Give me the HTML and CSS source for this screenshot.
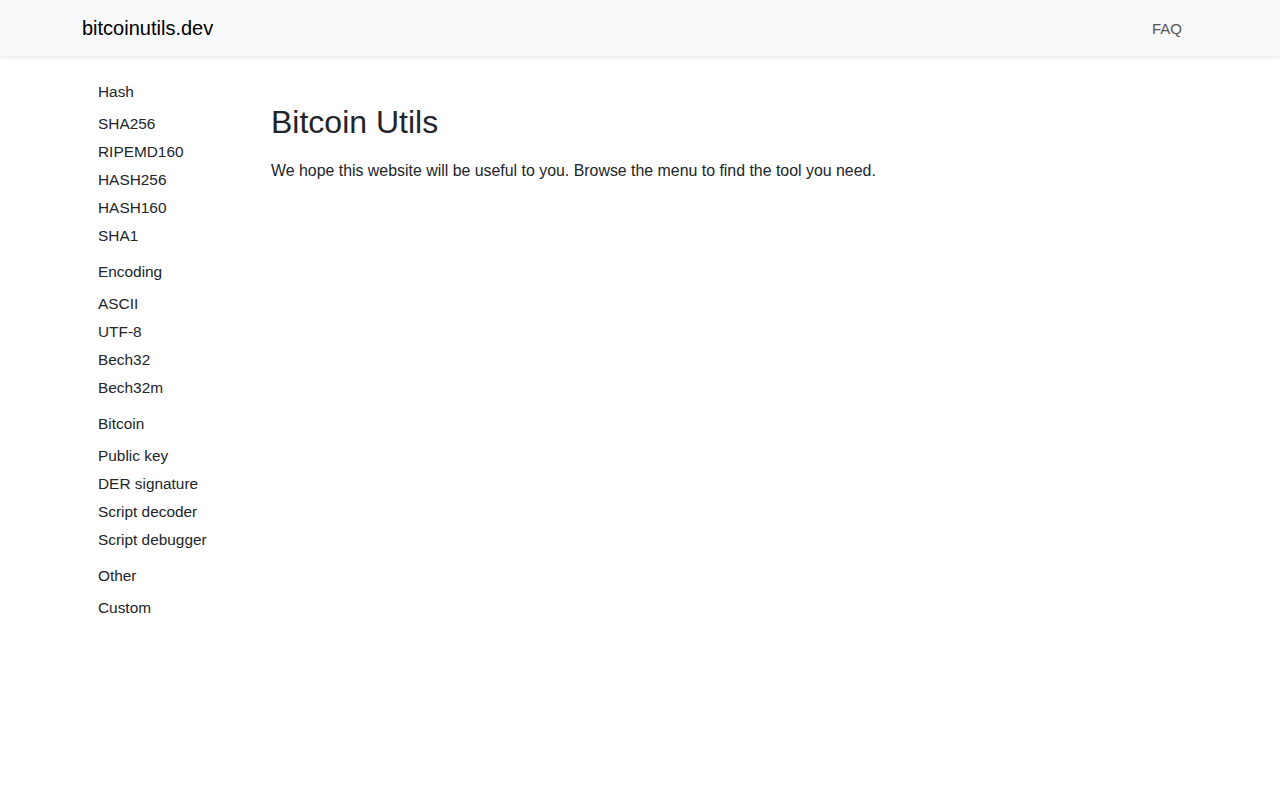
FILE: index.html
```html
<!DOCTYPE html>
<html lang="en">
<head>
    <meta charset="UTF-8">
    <meta name="viewport" content="width=device-width, initial-scale=1.0">
    <title>bitcoinutils.dev</title>
    <link rel="stylesheet" href="styles.css">
</head>
<body>
    <!-- Top navbar -->
    <nav class="navbar">
        <div class="container nav-inner">
            <a class="brand" href="#">bitcoinutils.dev</a>
            <a class="nav-link" href="#">FAQ</a>
        </div>
    </nav>

    <div class="container main-row">
        <!-- Sidebar menu -->
        <aside class="sidebar">
            <div class="menu-group">
                <div class="menu-title">Hash</div>
                <a class="menu-item" href="#">SHA256</a>
                <a class="menu-item" href="#">RIPEMD160</a>
                <a class="menu-item" href="#">HASH256</a>
                <a class="menu-item" href="#">HASH160</a>
                <a class="menu-item" href="#">SHA1</a>
            </div>
            <div class="menu-group">
                <div class="menu-title">Encoding</div>
                <a class="menu-item" href="#">ASCII</a>
                <a class="menu-item" href="#">UTF-8</a>
                <a class="menu-item" href="#">Bech32</a>
                <a class="menu-item" href="#">Bech32m</a>
            </div>
            <div class="menu-group">
                <div class="menu-title">Bitcoin</div>
                <a class="menu-item" href="#">Public key</a>
                <a class="menu-item" href="#">DER signature</a>
                <a class="menu-item" href="#">Script decoder</a>
                <a class="menu-item" href="#">Script debugger</a>
            </div>
            <div class="menu-group">
                <div class="menu-title">Other</div>
                <a class="menu-item" href="#">Custom</a>
            </div>
        </aside>

        <!-- Main content -->
        <main class="content">
            <h1 class="page-title">Bitcoin Utils</h1>
            <p class="intro">We hope this website will be useful to you. Browse the menu to find the tool you need.</p>
        </main>
    </div>
</body>
</html>
```

FILE: styles.css
```css
/* Base */
body {
    margin: 0;
    font-family: "Liberation Sans", Arial, sans-serif;
    font-size: 15.4px;
    color: #212529;
    background: #fff;
}

a {
    text-decoration: none;
    color: inherit;
}

.container {
    width: 1140px;
    margin: 0 auto;
    padding: 0 12px;
    box-sizing: border-box;
}

/* Navbar */
.navbar {
    background-color: #f8f9fa;
    height: 56px;
    box-shadow: 0 2px 4px rgba(0, 0, 0, 0.08);
}

.nav-inner {
    display: flex;
    align-items: center;
    justify-content: space-between;
    height: 100%;
}

.brand {
    font-size: 20px;
    color: #000;
}

.nav-link {
    font-size: 15px;
    color: #555;
    padding: 8px 16px 8px 8px;
}

/* Layout */
.main-row {
    display: flex;
    padding: 24px 0 0;
}

.sidebar {
    width: 190px;
    padding: 0 12px 0 28px;
    box-sizing: border-box;
    flex-shrink: 0;
}

.menu-group {
    display: flex;
    flex-direction: column;
    margin-bottom: 10px;
}

.menu-title {
    line-height: 24px;
    margin-bottom: 6px;
}

.menu-item {
    line-height: 28px;
}

.content {
    flex: 1;
    padding: 0 12px 0 11px;
}

.page-title {
    font-size: 32px;
    font-weight: 400;
    margin: 23px 0 21px;
    line-height: 1.2;
}

.intro {
    margin: 0;
    font-size: 15.9px;
}
```
